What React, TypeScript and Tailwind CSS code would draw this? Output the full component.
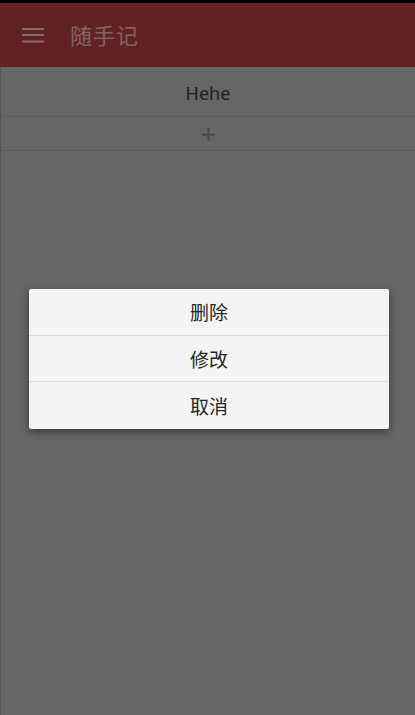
import React from 'react';

const font = { fontFamily: '"Noto Sans", "Noto Sans CJK SC", sans-serif' };

const MenuItem: React.FC<{ label: string; last?: boolean }> = ({ label, last }) => (
  <div
    className={`h-[46.5px] pt-[3px] flex items-center justify-center text-[19px] text-[#262626] ${
      last ? '' : 'border-b border-[#dcdcdc]'
    }`}
  >
    {label}
  </div>
);

export default function App() {
  return (
    <div className="relative w-[415px] h-[715px] overflow-hidden bg-[#666666]" style={font}>
      <div className="h-[3px] bg-black" />
      <header className="h-[64px] bg-[#622224] flex items-center">
        <svg className="ml-[22px] w-[22px] h-[16px]" viewBox="0 0 22 16">
          <rect x="0" y="1" width="22" height="2" fill="#7e7070" />
          <rect x="0" y="7" width="22" height="2" fill="#7e7070" />
          <rect x="0" y="13.5" width="22" height="2" fill="#7e7070" />
        </svg>
        <span className="ml-[26px] text-[22px] text-[#806464] tracking-[1px]">随手记</span>
      </header>

      <div className="border-l border-[#555555] h-[648px]">
        <div className="h-[50px] pt-[3px] flex items-center justify-center text-[18px] text-[#1c1c1c] border-b border-[#5c5c5c]">
          Hehe
        </div>
        <div className="h-[34px] pt-[2px] flex items-center justify-center border-b border-[#5c5c5c]">
          <svg className="w-[13px] h-[13px]" viewBox="0 0 13 13">
            <rect x="0" y="5.5" width="13" height="2.2" fill="#4a4a4a" />
            <rect x="5.4" y="0" width="2.2" height="13" fill="#4a4a4a" />
          </svg>
        </div>
      </div>

      <div className="absolute left-[29px] top-[289px] w-[360px] bg-[#f4f4f4] rounded-[2px] shadow-[0_3px_8px_rgba(0,0,0,0.45)]">
        <MenuItem label="删除" />
        <MenuItem label="修改" />
        <MenuItem label="取消" last />
      </div>
    </div>
  );
}
